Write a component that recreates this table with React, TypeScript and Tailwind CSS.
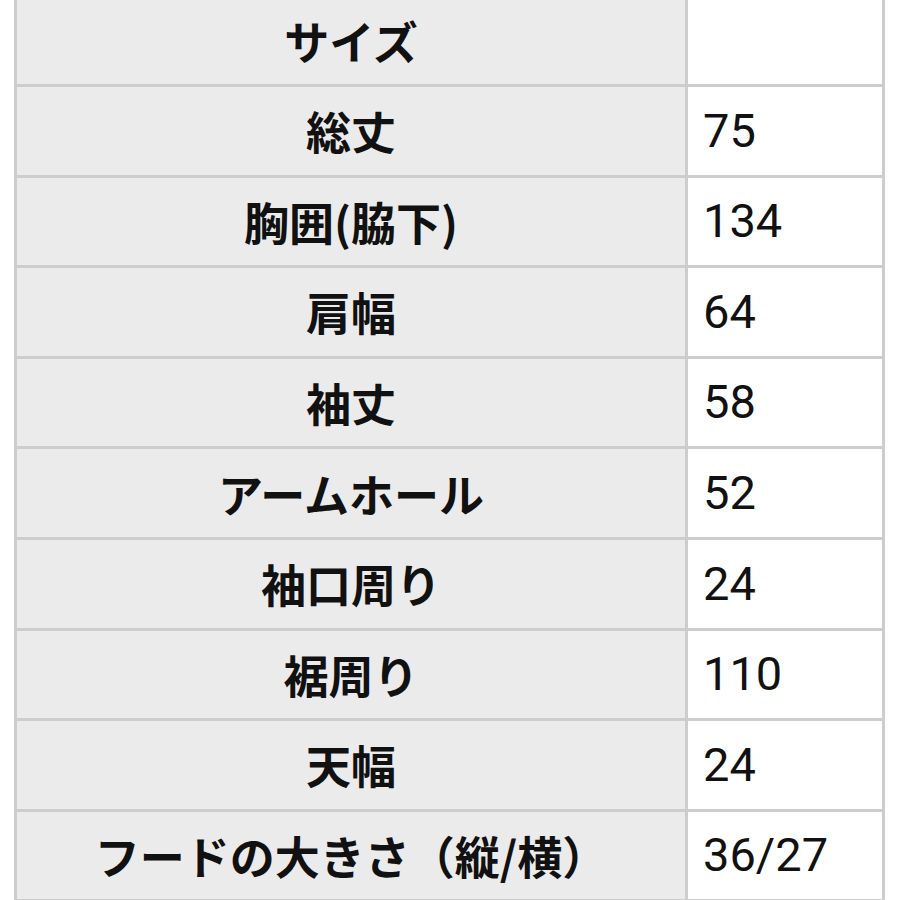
const rows: [string, string][] = [
  ['サイズ', ''],
  ['総丈', '75'],
  ['胸囲(脇下)', '134'],
  ['肩幅', '64'],
  ['袖丈', '58'],
  ['アームホール', '52'],
  ['袖口周り', '24'],
  ['裾周り', '110'],
  ['天幅', '24'],
  ['フードの大きさ（縦/横）', '36/27'],
];

export default function App() {
  return (
    <div className="w-[900px] h-[900px] overflow-hidden bg-white">
      <div className="ml-[14px] mt-[-3.5px] w-[871px] grid grid-cols-[668px_194px] gap-[3px] bg-[#cdcdcd] px-[3px] pb-[12px]">
        {rows.map(([label, value]) => (
          <div key={label} className="contents">
            <div className="h-[87.6px] bg-[#ebebeb] flex items-center justify-center text-[45px] font-bold text-[#111] font-['Noto_Sans_CJK_JP','Noto_Sans',sans-serif]">
              {label}
            </div>
            <div className="h-[87.6px] bg-white flex items-center pl-[15px] text-[47px] text-[#111] font-['Roboto','Noto_Sans_CJK_JP',sans-serif]">
              {value}
            </div>
          </div>
        ))}
        <div className="h-[20px] bg-[#ebebeb]" />
        <div className="h-[20px] bg-white" />
      </div>
    </div>
  );
}
